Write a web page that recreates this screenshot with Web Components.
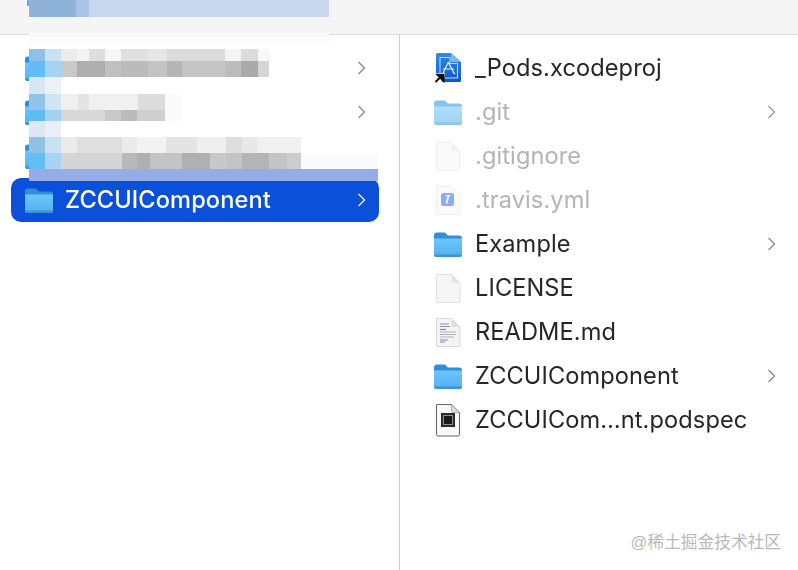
<!DOCTYPE html>
<html lang="en">
<head>
<meta charset="utf-8">
<title>Finder</title>
<style>
  html, body { margin: 0; padding: 0; background: #fff; }
  body { font-family: Inter, "Liberation Sans", "Noto Sans CJK SC", sans-serif; }
</style>
</head>
<body>

<finder-window>
  <finder-column slot="left" class="left">
    <finder-row icon="folder" chevron></finder-row>
    <finder-row icon="folder" chevron></finder-row>
    <finder-row icon="folder"></finder-row>
    <finder-row icon="folder" chevron selected name="ZCCUIComponent"></finder-row>
  </finder-column>
  <finder-column slot="right">
    <finder-row icon="xcode" name="_Pods.xcodeproj"></finder-row>
    <finder-row icon="folder" name=".git" chevron dim></finder-row>
    <finder-row icon="doc" name=".gitignore" dim></finder-row>
    <finder-row icon="travis" name=".travis.yml" dim></finder-row>
    <finder-row icon="folder" name="Example" chevron></finder-row>
    <finder-row icon="doc" name="LICENSE"></finder-row>
    <finder-row icon="readme" name="README.md"></finder-row>
    <finder-row icon="folder" name="ZCCUIComponent" chevron></finder-row>
    <finder-row icon="podspec" name="ZCCUICom…nt.podspec"></finder-row>
  </finder-column>
  <mosaic-patch slot="overlay"></mosaic-patch>
  <water-mark slot="overlay">@稀土掘金技术社区</water-mark>
</finder-window>

<script>
const sheet = 'M3.500 2.500h15l8.500 8.500v18a1.500 1.500 0 0 1-1.500 1.500H5a1.500 1.500 0 0 1-1.500-1.500z';
const fold = 'M18.500 2.500v7a1.500 1.500 0 0 0 1.500 1.500h7z';

const icons = {
  folder: /* html */`
    <svg width="30" height="28" viewBox="0 0 30 28">
      <defs><linearGradient id="f" x1="0" y1="0" x2="0" y2="1">
        <stop offset="0" stop-color="#6fc6fb"/><stop offset="1" stop-color="#4fb0ef"/>
      </linearGradient></defs>
      <path d="M1 5.500C1 3.500 2 2.500 4 2.500h6.500c1.300 0 2 .5 2.800 1.300L14.800 5.500H26c1.800 0 3 1 3 2.800V12H1z" fill="#2f8fdb"/>
      <path d="M1 8.500h28v16c0 1.700-1 2.500-2.700 2.500H3.700C2 27 1 26.200 1 24.500z" fill="url(#f)"/>
      <path d="M1 24.500h28c0 1.700-1 2.500-2.700 2.500H3.700C2 27 1 26.200 1 24.500z" fill="#3a93d6"/>
    </svg>`,
  doc: /* html */`
    <svg width="30" height="32" viewBox="0 0 30 32">
      <path d="${sheet}" fill="#f6f6f6" stroke="#e0e0e0"/>
      <path d="${fold}" fill="#e6e6e6"/>
    </svg>`,
  readme: /* html */`
    <svg width="30" height="32" viewBox="0 0 30 32">
      <path d="${sheet}" fill="#f4f4f4" stroke="#d8d8d8"/>
      <path d="${fold}" fill="#dfdfdf"/>
      <path d="M7 8h9M7 10.500h10" stroke="#8a97a8" stroke-width="1.200"/>
      <path d="M7 13.500h6" stroke="#c66a8e" stroke-width="1.200"/>
      <path d="M7 16h16M7 18.500h16M7 21h14" stroke="#aab0b8"/>
      <path d="M7 24h8M7 26h5" stroke="#7d93ad"/>
    </svg>`,
  travis: /* html */`
    <svg width="30" height="32" viewBox="0 0 30 32">
      <path d="${sheet}" fill="#f7f7f7" stroke="#e4e4e4"/>
      <rect x="8" y="9" width="13" height="13" rx="2.500" fill="#2a6ae8"/>
      <path d="M15.500 11.500l-2 8" stroke="#fff" stroke-width="1.800"/>
      <path d="M12.500 11.500h5" stroke="#fff"/>
    </svg>`,
  podspec: /* html */`
    <svg width="30" height="34" viewBox="0 0 30 34">
      <path d="M3.500 1.500h15l8 8v22a1.500 1.500 0 0 1-1.500 1.500H5a1.500 1.500 0 0 1-1.500-1.500z" fill="#f8f8f8" stroke="#666"/>
      <path d="M18.500 1.500v6.500a1.500 1.500 0 0 0 1.500 1.500h6.500z" fill="#ddd" stroke="#888" stroke-width=".6"/>
      <rect x="8" y="10" width="14" height="14" fill="#2b2b2b"/>
      <rect x="10.500" y="12.500" width="9" height="9" fill="#181818" stroke="#8f8f8f"/>
    </svg>`,
  xcode: /* html */`
    <svg width="30" height="32" viewBox="0 0 30 32">
      <defs><linearGradient id="x" x1="0" y1="0" x2="0" y2="1">
        <stop offset="0" stop-color="#2f8ce6"/><stop offset="1" stop-color="#0f55c4"/>
      </linearGradient></defs>
      <path d="M3 2.500A1.500 1.500 0 0 1 4.500 1H18l10 9v18.500a1.500 1.500 0 0 1-1.500 1.500h-22A1.500 1.500 0 0 1 3 28.500z" fill="url(#x)"/>
      <path d="M18 1v7.500A1.500 1.500 0 0 0 19.500 10H28z" fill="#7fb6ee"/>
      <path d="M7 5.500h10v6h7.500V26H7z" fill="none" stroke="#bcd9f7" stroke-width="1.100"/>
      <path d="M15.500 10l-5 10M15 10l5.500 10M10 17h11M9 22l2-2M22 22l-2-2" fill="none" stroke="#e4f0fc" stroke-width="1.200"/>
      <path d="M1 31V21h11v3l-4 3.500 2 3.500z" fill="#fff"/>
      <path d="M2.500 30l6.500-6.500M4.500 22.800h6v6z" fill="#111" stroke="#111" stroke-width="2"/>
    </svg>`
};

class FileIcon extends HTMLElement {
  static get observedAttributes() { return ['type']; }
  constructor() {
    super();
    this.attachShadow({mode: 'open'});
  }
  attributeChangedCallback() {
    this.shadowRoot.innerHTML = /* html */`
      <style>
        :host { display: flex; align-items: center; justify-content: center; width: 30px; height: 34px; }
        svg { display: block; }
      </style>
      ${icons[this.getAttribute('type')] || ''}
    `;
  }
}

class FinderRow extends HTMLElement {
  connectedCallback() {
    if(this.shadowRoot) return;
    this.attachShadow({mode: 'open'});
    const chevron = this.hasAttribute('chevron')
      ? `<svg class="chevron" width="10" height="16" viewBox="0 0 10 16"><path d="M1.500 2L7.500 8l-6 6" fill="none" stroke="currentColor" stroke-width="1.400"/></svg>`
      : '';
    this.shadowRoot.innerHTML = /* html */`
      <style>
        :host {
          display: flex;
          align-items: center;
          gap: var(--row-gap, 11px);
          height: 44px;
          padding: 0 13px;
          color: #262626;
          font-size: 23.600px;
          letter-spacing: .1px;
        }
        :host([dim]) { color: #b4b4b4; }
        :host([dim]) file-icon { opacity: .55; }
        :host([selected]) {
          color: #fff;
          background: #0a50d9;
          border-radius: 10px;
          font-weight: 500;
        }
        .name { flex: 1; padding-bottom: 2px; white-space: nowrap; filter: blur(.3px); }
        .chevron { color: #8b8b8b; margin-right: -1px; }
        :host([dim]) .chevron { color: #9a9a9a; }
        :host([selected]) .chevron { color: #e8effc; }
      </style>
      <file-icon type="${this.getAttribute('icon')}"></file-icon>
      <span class="name">${this.getAttribute('name') || ''}</span>
      ${chevron}
    `;
  }
}

class FinderColumn extends HTMLElement {
  constructor() {
    super();
    this.attachShadow({mode: 'open'});
    this.shadowRoot.innerHTML = /* html */`
      <style>
        :host { display: flex; flex-direction: column; padding: 11px 0 0; }
      </style>
      <slot></slot>
    `;
  }
}

class FinderWindow extends HTMLElement {
  constructor() {
    super();
    this.attachShadow({mode: 'open'});
    this.shadowRoot.innerHTML = /* html */`
      <style>
        :host { display: block; position: relative; width: 798px; height: 570px; overflow: hidden; background: #fff; }
        .toolbar { height: 34px; background: #f5f5f5; border-bottom: 1px solid #dadada; }
        .columns { display: grid; grid-template-columns: 400px 1fr; height: 535px; }
        .pane { min-width: 0; }
        .pane.left { border-right: 1px solid #cfcfcf; padding: 0 20px 0 11px; box-sizing: content-box; width: 368px; }
        .pane.right { padding: 0 9px 0 20px; --row-gap: 12px; }
      </style>
      <div class="toolbar"></div>
      <div class="columns">
        <div class="pane left"><slot name="left"></slot></div>
        <div class="pane right"><slot name="right"></slot></div>
      </div>
      <slot name="overlay"></slot>
    `;
  }
}

// blurred-out part of the screenshot: each cell is "right edge x, colour"
const bands = [
  {top: 0, left: 27, h: 6, cells: [[29, '#6fa3d0']]},
  {top: 0, left: 29, h: 17, cells: [[76, '#8fb3d8'], [89, '#a9c4e4'], [329, '#c8d8ee']]},
  {top: 33, left: 29, h: 11, cells: [[329, '#fbfbfb']]},
  {top: 49, left: 29, h: 12, cells: [[45, '#8fc1e6'], [61, '#c9e2f3'], [77, '#ececec'], [89, '#f3f3f3'], [105, '#dedede'], [121, '#f7f7f7'], [148, '#e0e0e0'], [167, '#e6e6e6'], [225, '#dcdcdc'], [241, '#f4f4f4'], [258, '#dcdcdc'], [269, '#f8f8f8']]},
  {top: 61, left: 29, h: 16, cells: [[45, '#63bdf5'], [61, '#a5d3f5'], [77, '#c9c9c9'], [105, '#aeaeae'], [121, '#c0c0c0'], [148, '#bbbbbb'], [167, '#c3c3c3'], [182, '#b5b5b5'], [225, '#c5c5c5'], [241, '#bcbcbc'], [258, '#aaaaaa'], [269, '#d5d5d5']]},
  {top: 77, left: 29, h: 17, cells: [[45, '#d8e6f2'], [61, '#ecf1f7']]},
  {top: 94, left: 29, h: 16, cells: [[45, '#93c4e7'], [61, '#cfe5f4'], [78, '#f0f0f0'], [89, '#e4e4e4'], [138, '#f0f0f0'], [165, '#dcdcdc'], [181, '#fafafa']]},
  {top: 110, left: 29, h: 11, cells: [[45, '#5fbbf0'], [61, '#a5d0f0'], [105, '#d8d8d8'], [121, '#c9c9c9'], [137, '#bbbbbb'], [165, '#cfcfcf'], [181, '#fafafa']]},
  {top: 121, left: 29, h: 16, cells: [[45, '#dde8f2'], [61, '#eaf0f6']]},
  {top: 137, left: 29, h: 16, cells: [[45, '#90c2e6'], [61, '#c9e2f3'], [77, '#ebebeb'], [122, '#dfdfdf'], [137, '#ebebeb'], [166, '#f2f2f2'], [197, '#e4e4e4'], [226, '#efefef'], [242, '#dedede'], [257, '#e8e8e8'], [301, '#f0f0f0']]},
  {top: 153, left: 29, h: 16, cells: [[45, '#64bdf3'], [61, '#a8d3f3'], [122, '#d5d5d5'], [137, '#b9b9b9'], [150, '#b0b0b0'], [182, '#c4c4c4'], [210, '#b0b0b0'], [226, '#c8c8c8'], [242, '#c4c4c4'], [269, '#b5b5b5'], [287, '#c4c4c4'], [301, '#cdcdcd'], [378, '#fafafa']]},
  {top: 169, left: 29, h: 12, cells: [[378, '#93ade8']]}
];

class MosaicPatch extends HTMLElement {
  constructor() {
    super();
    this.attachShadow({mode: 'open'});
    const html = bands.map(band => {
      let x = band.left;
      const spans = band.cells.map(c => {
        const span = `<i style="width:${c[0] - x}px;background:${c[1]}"></i>`;
        x = c[0];
        return span;
      }).join('');
      return `<div class="band" style="top:${band.top}px;left:${band.left}px;height:${band.h}px">${spans}</div>`;
    }).join('');
    this.shadowRoot.innerHTML = /* html */`
      <style>
        :host { position: absolute; inset: 0; pointer-events: none; filter: blur(.6px); }
        .band { position: absolute; display: flex; }
        i { display: block; height: 100%; }
      </style>
      ${html}
    `;
  }
}

class WaterMark extends HTMLElement {
  constructor() {
    super();
    this.attachShadow({mode: 'open'});
    this.shadowRoot.innerHTML = /* html */`
      <style>
        :host {
          position: absolute;
          right: 17px;
          bottom: 17px;
          color: #b9b9b9;
          font: 16.700px/20px "Liberation Sans", "Noto Sans CJK SC", sans-serif;
          white-space: nowrap;
        }
      </style>
      <slot></slot>
    `;
  }
}

customElements.define('file-icon', FileIcon);
customElements.define('finder-row', FinderRow);
customElements.define('finder-column', FinderColumn);
customElements.define('finder-window', FinderWindow);
customElements.define('mosaic-patch', MosaicPatch);
customElements.define('water-mark', WaterMark);
</script>
</body>
</html>
